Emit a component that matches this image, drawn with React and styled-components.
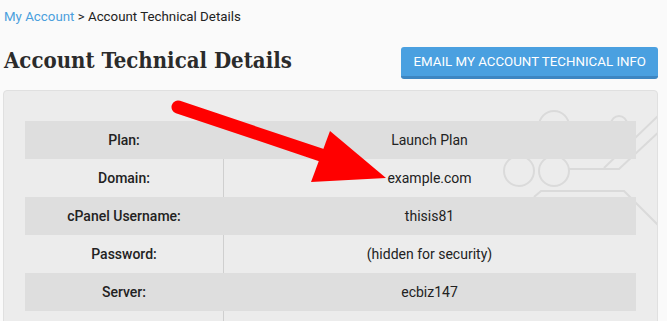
import React from 'react';
import styled, { createGlobalStyle } from 'styled-components';

const GlobalStyle = createGlobalStyle`
  html, body {
    margin: 0;
    padding: 0;
    background: #fafafa;
    font-family: Roboto, "Liberation Sans", sans-serif;
    color: #222;
  }
`;

const Page = styled.div`
  position: relative;
  padding: 8px 9px 0 3px;
  overflow: hidden;
  height: 321px;
  box-sizing: border-box;
`;

const Breadcrumb = styled.div`
  padding-left: 1px;
  font-size: 13.3px;
  line-height: 18px;
  color: #222;

  a {
    color: #4a9fdd;
    text-decoration: none;
  }
`;

const HeaderRow = styled.div`
  display: flex;
  justify-content: space-between;
  align-items: flex-start;
  margin-top: 21px;
`;

const Title = styled.h1`
  margin: 0;
  padding: 1px 0 0 1px;
  font-family: "DejaVu Serif Condensed", "DejaVu Serif", serif;
  font-size: 22px;
  font-weight: 600;
  line-height: 24px;
  color: #2b2b2b;
`;

const EmailButton = styled.button`
  height: 32px;
  padding: 0 12px;
  border: none;
  border-bottom: 3px solid #3d86c2;
  border-radius: 3px;
  background: #4aa0e0;
  color: #fff;
  font-family: Roboto, "Liberation Sans", sans-serif;
  font-size: 13.3px;
  text-transform: uppercase;
  cursor: pointer;
`;

const Panel = styled.div`
  position: relative;
  margin-top: 11px;
  padding: 30px 21px 0;
  background: #ececec;
  border: 1px solid #e0e0e0;
  border-radius: 4px;
`;

const Circuit = styled.svg`
  position: absolute;
  left: 0;
  top: 0;
  width: 100%;
  height: 100%;
`;

const Table = styled.div`
  position: relative;
  background-image: linear-gradient(#cfcfcf, #cfcfcf);
  background-repeat: no-repeat;
  background-size: 1px calc(100% - 11px);
  background-position: 198px 11px;
`;

const Row = styled.div`
  display: grid;
  grid-template-columns: 198px 1fr;
  height: 38px;
  align-items: center;
  font-size: 14px;
  background: ${(p) => (p.$shaded ? '#dedede' : 'transparent')};
`;

const Label = styled.div`
  text-align: center;
  font-weight: 500;
`;

const Value = styled.div`
  text-align: center;
`;

const Arrow = styled.svg`
  position: absolute;
  left: 0;
  top: 0;
  pointer-events: none;
`;

const rows = [
  ['Plan:', 'Launch Plan'],
  ['Domain:', 'example.com'],
  ['cPanel Username:', 'thisis81'],
  ['Password:', '(hidden for security)'],
  ['Server:', 'ecbiz147'],
  ['', ''],
];

export default function App() {
  return (
    <>
      <GlobalStyle />
      <Page>
        <Breadcrumb>
          <a href="#">My Account</a> &gt; Account Technical Details
        </Breadcrumb>
        <HeaderRow>
          <Title>Account Technical Details</Title>
          <EmailButton>Email my account technical info</EmailButton>
        </HeaderRow>
        <Panel>
          <Circuit>
            <g fill="none" stroke="#dadada" strokeWidth="2">
              <circle cx="550" cy="35" r="15" />
              <circle cx="615" cy="33" r="8" />
              <circle cx="515" cy="80" r="15" />
              <circle cx="550" cy="80" r="15" />
              <polyline points="565,78 615,78 660,36" />
              <polyline points="600,77 660,19" />
              <polyline points="530,106 537,100 620,100 660,140" />
            </g>
          </Circuit>
          <Table>
            {rows.map(([label, value], i) => (
              <Row key={i} $shaded={i % 2 === 0 && label !== ''}>
                <Label>{label}</Label>
                <Value>{value}</Value>
              </Row>
            ))}
          </Table>
        </Panel>
        <Arrow width="667" height="321">
          <line x1="178" y1="107" x2="330" y2="158" stroke="#ff0000" strokeWidth="13" strokeLinecap="round" />
          <polygon points="330,131 386,178 311,182" fill="#ff0000" />
        </Arrow>
      </Page>
    </>
  );
}
